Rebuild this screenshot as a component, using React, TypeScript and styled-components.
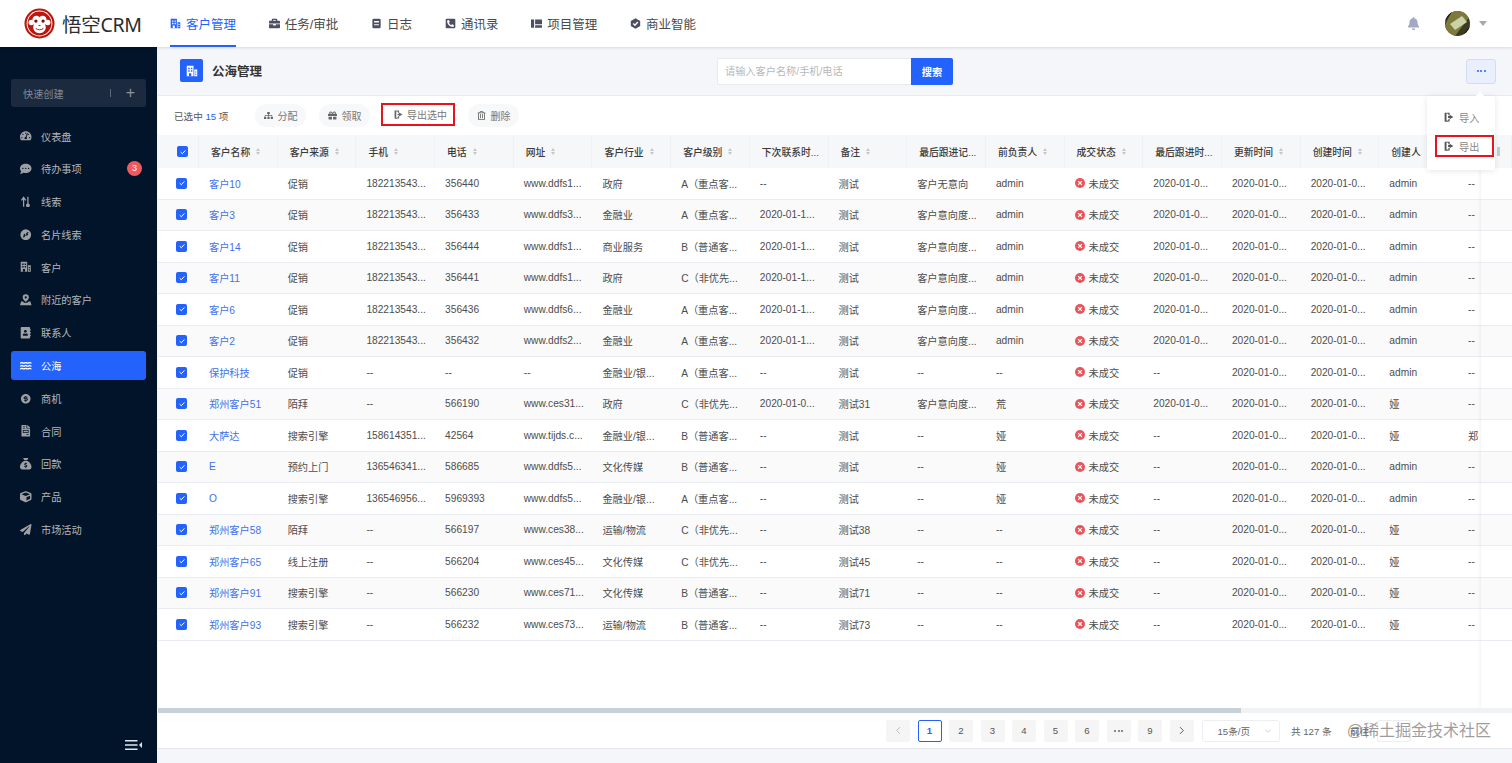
import styled, { createGlobalStyle } from 'styled-components'
import {
  FaAddressBook,
  FaBell,
  FaBriefcase,
  FaCommentDots,
  FaCube,
  FaFileInvoice,
  FaGift,
  FaPaperPlane,
  FaPhoneSquareAlt,
  FaRegTrashAlt,
  FaSitemap,
  FaTachometerAlt,
  FaWater,
} from 'react-icons/fa'
import { FaSackDollar } from 'react-icons/fa6'
import { RiMoneyDollarCircleFill } from 'react-icons/ri'

const GlobalStyle = createGlobalStyle`
  html, body {
    margin: 0;
    height: 100%;
    background: #f5f6f9;
    font-family: 'Liberation Sans', 'Noto Sans CJK SC', sans-serif;
    color: #4d4d4d;
  }
  * { box-sizing: border-box; }
`

const Page = styled.div`
  display: flex;
  flex-direction: column;
  width: 100%;
  height: 100vh;
  overflow: hidden;
`

const TopBar = styled.header`
  display: flex;
  align-items: center;
  flex: 0 0 47px;
  height: 47px;
  padding-left: 24px;
  background: #fff;
  box-shadow: 0 1px 3px rgba(0, 0, 0, 0.12);
  position: relative;
  z-index: 3;
`

const Brand = styled.div`
  display: flex;
  align-items: center;
  gap: 7px;
  width: 146px;
  font-family: 'Noto Sans', 'Noto Sans CJK SC', sans-serif;
  font-size: 19.5px;
  color: #2c2c2c;
  letter-spacing: -0.3px;
`

const Tabs = styled.nav`
  display: flex;
  gap: 32.8px;
  height: 47px;
`

const Tab = styled.a<{ $active?: boolean }>`
  display: flex;
  align-items: center;
  gap: 5px;
  height: 47px;
  padding-top: 2px;
  font-size: 12.5px;
  color: ${(p) => (p.$active ? '#2362fb' : '#4a4a4a')};
  border-bottom: 2px solid ${(p) => (p.$active ? '#2362fb' : 'transparent')};
  svg {
    width: 11px;
    height: 11px;
    color: ${(p) => (p.$active ? '#2362fb' : '#4d4d63')};
  }
`

const TopRight = styled.div`
  display: flex;
  align-items: center;
  margin-left: auto;
  padding-right: 25px;
  svg.bell {
    width: 13px;
    height: 13px;
    color: #a3a9c2;
    margin-right: 25px;
  }
`

const Caret = styled.span`
  width: 0;
  height: 0;
  margin-left: 9.5px;
  border-left: 4px solid transparent;
  border-right: 4px solid transparent;
  border-top: 5px solid #a8a8a8;
`

const Body = styled.div`
  display: flex;
  flex: 1;
  min-height: 0;
`

const Sidebar = styled.aside`
  display: flex;
  flex-direction: column;
  flex: 0 0 157px;
  padding: 32px 11px 13px;
  background: #021429;
`

const QuickCreate = styled.div`
  display: flex;
  align-items: center;
  height: 28px;
  padding: 0 11px 0 12px;
  border-radius: 3px;
  background: #1b2a3e;
  font-size: 10.2px;
  color: #7f8a99;
  span.sep {
    width: 1px;
    height: 8px;
    margin-left: auto;
    margin-right: 15px;
    background: #5c6879;
  }
  span.plus {
    font-size: 16px;
    line-height: 16px;
    font-weight: 300;
    color: #8a94a3;
  }
`

const Nav = styled.div`
  display: flex;
  flex-direction: column;
  gap: 3.8px;
  margin-top: 14.5px;
`

const NavItem = styled.a<{ $active?: boolean }>`
  position: relative;
  display: flex;
  align-items: center;
  gap: 9.500px;
  height: 29px;
  padding-left: 9px;
  border-radius: 3px;
  font-size: 10.2px;
  color: ${(p) => (p.$active ? '#fff' : '#b3b8bf')};
  background: ${(p) => (p.$active ? '#2362fb' : 'transparent')};
  svg {
    width: 11.500px;
    height: 11.500px;
    color: ${(p) => (p.$active ? '#fff' : '#9c9fa3')};
  }
`

const Badge = styled.span`
  position: absolute;
  right: 4px;
  top: 7px;
  width: 15px;
  height: 15px;
  border-radius: 50%;
  background: #f0595f;
  color: #fff;
  font-size: 9px;
  line-height: 15px;
  text-align: center;
`

const Collapse = styled.div`
  display: flex;
  justify-content: flex-end;
  margin-top: auto;
  padding-right: 4px;
  svg {
    width: 17px;
    height: 10px;
  }
`

const Main = styled.main`
  display: flex;
  flex-direction: column;
  flex: 1;
  min-width: 0;
  margin-left: 1px;
`

const PageHead = styled.div`
  display: grid;
  grid-template-columns: 1fr auto 1fr;
  align-items: center;
  flex: 0 0 48px;
  padding: 0 16px;
`

const Title = styled.div`
  display: flex;
  align-items: center;
  gap: 9px;
  margin: 0 0 1px 6px;
  font-size: 12.5px;
  font-weight: 600;
  color: #333;
`

const TitleIcon = styled.span`
  display: flex;
  align-items: center;
  justify-content: center;
  width: 23px;
  height: 23px;
  border-radius: 2px;
  background: #2362fb;
  color: #fff;
  svg {
    width: 12px;
    height: 12px;
  }
`

const Search = styled.div`
  display: flex;
  height: 27px;
`

const SearchInput = styled.div`
  width: 194px;
  padding-left: 7px;
  background: #fff;
  border: 1px solid #e8eaee;
  border-right: 0;
  border-radius: 2px 0 0 2px;
  font-size: 10.2px;
  line-height: 25px;
  color: #b5b8bd;
`

const SearchButton = styled.button`
  width: 42px;
  border: 0;
  border-radius: 0 2px 2px 0;
  background: #2362fb;
  color: #fff;
  font: 600 10.2px 'Liberation Sans', 'Noto Sans CJK SC', sans-serif;
`

const MoreButton = styled.button`
  justify-self: end;
  display: flex;
  align-items: center;
  justify-content: center;
  gap: 1.5px;
  width: 30px;
  height: 25px;
  border: 1px solid #d5dcf2;
  border-radius: 3px;
  background: #e9effd;
  span {
    width: 2px;
    height: 2px;
    border-radius: 50%;
    background: #2362fb;
  }
`

const Panel = styled.section`
  position: relative;
  display: flex;
  flex-direction: column;
  flex: 1;
  min-height: 0;
  background: #fff;
  border-top: 1px solid #e9ebef;
`

const Toolbar = styled.div`
  display: flex;
  align-items: center;
  flex: 0 0 39px;
  gap: 13px;
  padding-left: 16px;
`

const Selected = styled.div`
  width: 68px;
  font-size: 9.6px;
  color: #555;
  b {
    font-weight: 400;
    color: #2362fb;
  }
`

const ToolButton = styled.button<{ $marked?: boolean }>`
  display: flex;
  align-items: center;
  gap: ${(p) => (p.$marked ? '4px' : '5px')};
  height: 23px;
  margin: ${(p) => (p.$marked ? '0 0 2px -2px' : '0')};
  padding: ${(p) => (p.$marked ? '0 6px 0 11px' : '0 8.5px')};
  border: ${(p) => (p.$marked ? '2px solid #e8141c' : '0')};
  border-radius: ${(p) => (p.$marked ? '0' : '12px')};
  background: ${(p) => (p.$marked ? '#fff' : '#f7f8fa')};
  color: #777;
  font: 10px 'Liberation Sans', 'Noto Sans CJK SC', sans-serif;
  svg {
    width: 9px;
    height: 9px;
    color: #666;
  }
`

const Table = styled.div`
  position: relative;
  flex: 1;
  min-height: 0;
  overflow: hidden;
`

const gridColumns = '41px repeat(16, 78.7px) 23px 1fr'

const HeadRow = styled.div`
  display: grid;
  grid-template-columns: ${gridColumns};
  height: 33px;
  background: #f6f7f9;
`

const HeadCell = styled.div`
  display: flex;
  align-items: center;
  gap: 6px;
  padding-left: 12px;
  font-size: 9.8px;
  font-weight: 500;
  white-space: nowrap;
  overflow: hidden;
  color: #3a3a3a;
  border-right: 1px solid #f0f1f4;
  &:first-child {
    padding-left: 19px;
  }
`

const Sorter = styled.span`
  display: flex;
  flex-direction: column;
  gap: 1.5px;
  &::before,
  &::after {
    content: '';
    border-left: 2.5px solid transparent;
    border-right: 2.5px solid transparent;
  }
  &::before {
    border-bottom: 3px solid #c4c7cc;
  }
  &::after {
    border-top: 3px solid #c4c7cc;
  }
`

const Check = styled.span`
  display: flex;
  align-items: center;
  justify-content: center;
  width: 11px;
  height: 11px;
  border-radius: 2px;
  background: #2362fb;
  svg {
    width: 8px;
    height: 8px;
  }
`

const Row = styled.div<{ $odd: boolean }>`
  display: grid;
  grid-template-columns: ${gridColumns};
  height: 31.5px;
  background: ${(p) => (p.$odd ? '#fafafa' : '#fff')};
  border-bottom: 1px solid #e9ecf0;
`

const Cell = styled.div`
  display: flex;
  align-items: center;
  padding-left: 10px;
  font-size: 10.2px;
  white-space: nowrap;
  overflow: hidden;
  &:first-child {
    padding-left: 18px;
  }
`

const NameLink = styled.a`
  color: #3f71ea;
`

const Status = styled.span`
  display: flex;
  align-items: center;
  gap: 4px;
  svg {
    width: 10px;
    height: 10px;
  }
`

const FixedShade = styled.div`
  position: absolute;
  top: 0;
  right: 31px;
  bottom: 0;
  width: 4px;
  background: linear-gradient(to right, transparent, rgba(0, 0, 0, 0.035));
`

const HeadTool = styled.span`
  display: flex;
  align-self: center;
  margin-left: 4px;
  width: 3px;
  height: 9px;
  background: #c8cbd0;
`

const ScrollTrack = styled.div`
  flex: 0 0 5px;
  background: #f1f2f3;
`

const ScrollThumb = styled.div`
  width: 80%;
  height: 100%;
  background: #c8d1da;
`

const Pager = styled.div`
  position: relative;
  display: flex;
  align-items: center;
  flex: 0 0 35px;
  gap: 7.5px;
  padding-left: 728px;
  font-size: 9.6px;
`

const PageButton = styled.span<{ $current?: boolean; $muted?: boolean }>`
  display: flex;
  align-items: center;
  justify-content: center;
  width: 24px;
  height: 22px;
  border-radius: 2px;
  background: ${(p) => (p.$current ? '#fff' : '#f5f5f5')};
  border: 1px solid ${(p) => (p.$current ? '#2362fb' : '#f5f5f5')};
  color: ${(p) => (p.$current ? '#2362fb' : p.$muted ? '#bbb' : '#555')};
  font-weight: ${(p) => (p.$current ? 700 : 400)};
  svg {
    width: 9px;
    height: 9px;
  }
`

const PageDots = styled.span`
  display: flex;
  gap: 1.5px;
  i {
    width: 2px;
    height: 2px;
    border-radius: 50%;
    background: #666;
  }
`

const PageSize = styled.div`
  display: flex;
  align-items: center;
  justify-content: space-between;
  width: 78px;
  height: 22px;
  margin-left: 0.5px;
  padding: 0 7px 0 15px;
  border: 1px solid #eceef1;
  border-radius: 3px;
  color: #666;
  svg {
    width: 8px;
    height: 8px;
  }
`

const PagerText = styled.span`
  margin-left: 4px;
  color: #666;
`

const JumpText = styled.span`
  margin-left: 11px;
  color: #666;
`

const JumpBox = styled.span`
  width: 34px;
  height: 22px;
  border: 1px solid #eceef1;
  border-radius: 2px;
`

const Watermark = styled.div`
  position: absolute;
  right: 21px;
  top: 7px;
  font-size: 16px;
  line-height: 22px;
  color: rgba(120, 120, 120, 0.72);
  pointer-events: none;
  white-space: nowrap;
`

const Dropdown = styled.div`
  position: absolute;
  top: 0;
  right: 17px;
  z-index: 2;
  display: flex;
  flex-direction: column;
  gap: 7px;
  width: 68px;
  height: 74px;
  padding: 10px 1px 0 8px;
  background: #fff;
  border-radius: 2px;
  box-shadow: 0 1px 6px rgba(0, 0, 0, 0.1);
  &::before {
    content: '';
    position: absolute;
    top: -3px;
    right: 12px;
    width: 6px;
    height: 6px;
    background: #fff;
    transform: rotate(45deg);
  }
`

const DropItem = styled.div<{ $marked?: boolean }>`
  display: flex;
  align-items: center;
  gap: 5px;
  height: 22px;
  padding-left: 9px;
  border: ${(p) => (p.$marked ? '2px solid #e8141c' : '0')};
  font-size: 10.2px;
  color: #888;
  svg {
    width: 10px;
    height: 10px;
    color: #555;
    margin-left: ${(p) => (p.$marked ? '-2px' : '0')};
  }
`

const Foot = styled.div`
  flex: 0 0 15px;
  background: #f5f6f9;
  border-top: 1px solid #e6e8ec;
`

const BuildingIcon = () => (
  <svg viewBox="0 0 16 16" fill="currentColor">
    <path d="M1 1h9v14H1zM11 6h4v9h-4z" />
    <path fill="#fff" d="M3 3.500h2v2H3zM6.500 3.500h2v2h-2zM3 7h2v2H3zM6.500 7h2v2h-2zM12.200 8.500h1.600v1.600h-1.600zM12.200 11.500h1.600v1.600h-1.600zM4 11h3v4H4z" />
  </svg>
)

const NavBuildingIcon = () => (
  <svg viewBox="0 0 16 16" fill="currentColor">
    <path d="M1 1h9v14H1zM11 6h4v9h-4z" />
    <path fill="#021429" d="M3 3.500h2v2H3zM6.500 3.500h2v2h-2zM3 7h2v2H3zM6.500 7h2v2h-2zM12.200 8.500h1.600v1.600h-1.600zM12.200 11.500h1.600v1.600h-1.600zM4 11h3v4H4z" />
  </svg>
)

const NotebookIcon = () => (
  <svg viewBox="0 0 16 16" fill="currentColor">
    <rect x="2" y="1" width="12" height="14" rx="2" />
    <path fill="#fff" d="M4.500 4.500h7v2h-7zM4.500 9h7v1.600h-7z" />
  </svg>
)

const ProjectIcon = () => (
  <svg viewBox="0 0 16 16" fill="currentColor">
    <path d="M0 2h4.500v12H0zM6 2h10v7H6zM6 10.500h10V14H6z" />
  </svg>
)

const HexCheckIcon = () => (
  <svg viewBox="0 0 16 16">
    <path fill="currentColor" d="M8 .500 14.800 4.200v7.600L8 15.500 1.200 11.800V4.200z" />
    <path fill="none" stroke="#fff" strokeWidth="2" d="M4.800 8 7.200 10.400 11.400 5.800" />
  </svg>
)

const DoorIcon = () => (
  <svg viewBox="0 0 16 16" fill="currentColor">
    <path d="M1 1h8v4H7V3L4 2v12l3-1v-2h2v4H5v1L1 15z" />
    <path d="M9 6.500V4.500L15 8l-6 3.500v-2H6.500v-3z" />
  </svg>
)

const ArrowsIcon = () => (
  <svg viewBox="0 0 16 16" fill="none" stroke="currentColor" strokeWidth="1.800">
    <path d="M5 15V3M2 6l3-4 3 4" />
    <path d="M11 1v11" />
    <circle cx="11" cy="13" r="1.800" fill="currentColor" />
  </svg>
)

const LinkCircleIcon = () => (
  <svg viewBox="0 0 16 16">
    <circle cx="8" cy="8" r="7.500" fill="currentColor" />
    <path fill="none" stroke="#021429" strokeWidth="1.600" strokeLinecap="round" d="M5 11l2-2M9 7l2-2M6.500 7.500 5.500 8.500M9.500 8.500l1-1" />
  </svg>
)

const NearbyIcon = () => (
  <svg viewBox="0 0 16 16" fill="currentColor">
    <path d="M8 0.500a4.300 4.300 0 0 1 4.300 4.300C12.300 7.800 8 11 8 11S3.700 7.800 3.700 4.800A4.300 4.300 0 0 1 8 .500z" />
    <circle cx="8" cy="4.800" r="1.600" fill="#021429" />
    <path d="M1.500 10.500h2.800L5.500 12h5l1.200-1.500h2.800L16 15.500H0z" />
  </svg>
)

const StatusIcon = () => (
  <svg viewBox="0 0 16 16">
    <circle cx="8" cy="8" r="8" fill="#e9545b" />
    <path stroke="#fff" strokeWidth="2" d="M5 5l6 6M11 5l-6 6" />
  </svg>
)

const CheckMark = () => (
  <svg viewBox="0 0 12 12" fill="none" stroke="#fff" strokeWidth="1.500">
    <path d="M2.500 6.200 5 8.600 9.600 3.600" />
  </svg>
)

const Logo = () => (
  <svg width="31" height="31" viewBox="0 0 32 32">
    <circle cx="16" cy="16" r="15.500" fill="#b8160e" />
    <circle cx="16" cy="16" r="13.300" fill="#fff" />
    <circle cx="16" cy="16" r="12.300" fill="#b8160e" />
    <circle cx="7.500" cy="15" r="2.800" fill="#fff" />
    <circle cx="24.500" cy="15" r="2.800" fill="#fff" />
    <path fill="#fff" d="M16 9.500c1.500-2 6.500-2.500 7.200 1.800.4 2.800-1 4.500-1.200 6.200 2 5-2.500 8.500-6 8.500s-8-3.500-6-8.500c-.2-1.700-1.600-3.400-1.200-6.200C9.500 7 14.500 7.500 16 9.500z" />
    <circle cx="12.300" cy="13.500" r="1.700" fill="#7a1008" />
    <circle cx="19.700" cy="13.500" r="1.700" fill="#7a1008" />
    <path fill="none" stroke="#b8160e" strokeWidth="1" d="M12 21c2.500 2 5.500 2 8 0M15 18h2" />
  </svg>
)

const Avatar = () => (
  <svg width="25" height="25" viewBox="0 0 25 25">
    <defs>
      <clipPath id="avatarClip">
        <circle cx="12.500" cy="12.500" r="12.500" />
      </clipPath>
    </defs>
    <g clipPath="url(#avatarClip)">
      <rect width="25" height="25" fill="#3c3a22" />
      <path fill="#7d7a3c" d="M0 14 7 0h18v5L10 25H0z" />
      <path fill="#c8d3a7" d="M5 13 17 5l5 6-12 8z" />
      <path fill="#1d1c12" d="M17 25l8-10v10zM0 0h8L0 10z" />
    </g>
  </svg>
)

const CollapseIcon = () => (
  <svg viewBox="0 0 17 10" fill="#dfe5f0">
    <path d="M0 0h12.500v1.600H0zM0 4.200h12.500v1.600H0zM0 8.400h12.500V10H0zM17 2v6l-3-3z" />
  </svg>
)

const ChevronDown = () => (
  <svg viewBox="0 0 12 12" fill="none" stroke="#c4c7cc" strokeWidth="1.200">
    <path d="M2 4l4 4 4-4" />
  </svg>
)

const ChevronSide = ({ dir }: { dir: 'left' | 'right' }) => (
  <svg viewBox="0 0 12 12" fill="none" stroke="currentColor" strokeWidth="1.300">
    <path d={dir === 'left' ? 'M8 1.500 3.500 6 8 10.500' : 'M4 1.500 8.500 6 4 10.500'} />
  </svg>
)

const tabs = [
  { label: '客户管理', icon: <BuildingIcon />, active: true },
  { label: '任务/审批', icon: <FaBriefcase /> },
  { label: '日志', icon: <NotebookIcon /> },
  { label: '通讯录', icon: <FaPhoneSquareAlt /> },
  { label: '项目管理', icon: <ProjectIcon /> },
  { label: '商业智能', icon: <HexCheckIcon /> },
]

const navItems = [
  { label: '仪表盘', icon: <FaTachometerAlt /> },
  { label: '待办事项', icon: <FaCommentDots />, badge: 3 },
  { label: '线索', icon: <ArrowsIcon /> },
  { label: '名片线索', icon: <LinkCircleIcon /> },
  { label: '客户', icon: <NavBuildingIcon /> },
  { label: '附近的客户', icon: <NearbyIcon /> },
  { label: '联系人', icon: <FaAddressBook /> },
  { label: '公海', icon: <FaWater />, active: true },
  { label: '商机', icon: <RiMoneyDollarCircleFill /> },
  { label: '合同', icon: <FaFileInvoice /> },
  { label: '回款', icon: <FaSackDollar /> },
  { label: '产品', icon: <FaCube /> },
  { label: '市场活动', icon: <FaPaperPlane /> },
]

const columns = [
  { label: '客户名称', sort: true },
  { label: '客户来源', sort: true },
  { label: '手机', sort: true },
  { label: '电话', sort: true },
  { label: '网址', sort: true },
  { label: '客户行业', sort: true },
  { label: '客户级别', sort: true },
  { label: '下次联系时...' },
  { label: '备注', sort: true },
  { label: '最后跟进记...' },
  { label: '前负责人', sort: true },
  { label: '成交状态', sort: true },
  { label: '最后跟进时...' },
  { label: '更新时间', sort: true },
  { label: '创建时间', sort: true },
  { label: '创建人' },
]

const levelA = 'A（重点客...'
const levelB = 'B（普通客...'
const levelC = 'C（非优先...'
const date0 = '2020-01-0...'
const date1 = '2020-01-1...'
const phone = '182213543...'
const intent = '客户意向度...'

// name, source, mobile, tel, site, industry, level, next, note, record, owner, last, creator, tail
const rows = [
  ['客户10', '促销', phone, '356440', 'www.ddfs1...', '政府', levelA, '--', '测试', '客户无意向', 'admin', date0, 'admin', '--'],
  ['客户3', '促销', phone, '356433', 'www.ddfs3...', '金融业', levelA, date1, '测试', intent, 'admin', date0, 'admin', '--'],
  ['客户14', '促销', phone, '356444', 'www.ddfs1...', '商业服务', levelB, date1, '测试', intent, 'admin', date0, 'admin', '--'],
  ['客户11', '促销', phone, '356441', 'www.ddfs1...', '政府', levelC, date1, '测试', intent, 'admin', date0, 'admin', '--'],
  ['客户6', '促销', phone, '356436', 'www.ddfs6...', '金融业', levelA, date1, '测试', intent, 'admin', date0, 'admin', '--'],
  ['客户2', '促销', phone, '356432', 'www.ddfs2...', '金融业', levelA, date1, '测试', intent, 'admin', date0, 'admin', '--'],
  ['保护科技', '促销', '--', '--', '--', '金融业/银...', levelA, '--', '测试', '--', '--', '--', 'admin', '--'],
  ['郑州客户51', '陌拜', '--', '566190', 'www.ces31...', '政府', levelC, date0, '测试31', intent, '荒', date0, '娅', '--'],
  ['大萨达', '搜索引擎', '158614351...', '42564', 'www.tijds.c...', '金融业/银...', levelB, '--', '测试', '--', '娅', '--', '娅', '郑'],
  ['E', '预约上门', '136546341...', '586685', 'www.ddfs5...', '文化传媒', levelB, '--', '测试', '--', '娅', '--', 'admin', '--'],
  ['O', '搜索引擎', '136546956...', '5969393', 'www.ddfs5...', '金融业/银...', levelA, '--', '测试', '--', '娅', '--', 'admin', '--'],
  ['郑州客户58', '陌拜', '--', '566197', 'www.ces38...', '运输/物流', levelC, '--', '测试38', '--', '--', '--', '娅', '--'],
  ['郑州客户65', '线上注册', '--', '566204', 'www.ces45...', '文化传媒', levelC, '--', '测试45', '--', '--', '--', '娅', '--'],
  ['郑州客户91', '搜索引擎', '--', '566230', 'www.ces71...', '文化传媒', levelB, '--', '测试71', '--', '--', '--', '娅', '--'],
  ['郑州客户93', '搜索引擎', '--', '566232', 'www.ces73...', '运输/物流', levelB, '--', '测试73', '--', '--', '--', '娅', '--'],
]

export default function App() {
  return (
    <>
      <GlobalStyle />
      <Page>
        <TopBar>
          <Brand>
            <Logo />
            <span>悟空CRM</span>
          </Brand>
          <Tabs>
            {tabs.map((tab) => (
              <Tab key={tab.label} $active={tab.active}>
                {tab.icon}
                {tab.label}
              </Tab>
            ))}
          </Tabs>
          <TopRight>
            <FaBell className="bell" />
            <Avatar />
            <Caret />
          </TopRight>
        </TopBar>
        <Body>
          <Sidebar>
            <QuickCreate>
              快速创建
              <span className="sep" />
              <span className="plus">+</span>
            </QuickCreate>
            <Nav>
              {navItems.map((item) => (
                <NavItem key={item.label} $active={item.active}>
                  {item.icon}
                  {item.label}
                  {item.badge && <Badge>{item.badge}</Badge>}
                </NavItem>
              ))}
            </Nav>
            <Collapse>
              <CollapseIcon />
            </Collapse>
          </Sidebar>
          <Main>
            <PageHead>
              <Title>
                <TitleIcon>
                  <svg viewBox="0 0 16 16" fill="#fff">
                    <path d="M1 1h9v14H1zM11 6h4v9h-4z" />
                    <path fill="#2362fb" d="M3 3.500h2v2H3zM6.500 3.500h2v2h-2zM3 7h2v2H3zM6.500 7h2v2h-2zM12.200 8.500h1.600v1.600h-1.600zM12.200 11.500h1.600v1.600h-1.600zM4 11h3v4H4z" />
                  </svg>
                </TitleIcon>
                公海管理
              </Title>
              <Search>
                <SearchInput>请输入客户名称/手机/电话</SearchInput>
                <SearchButton>搜索</SearchButton>
              </Search>
              <MoreButton>
                <span />
                <span />
                <span />
              </MoreButton>
            </PageHead>
            <Panel>
              <Toolbar>
                <Selected>
                  已选中 <b>15</b> 项
                </Selected>
                <ToolButton>
                  <FaSitemap />
                  分配
                </ToolButton>
                <ToolButton>
                  <FaGift />
                  领取
                </ToolButton>
                <ToolButton $marked>
                  <DoorIcon />
                  导出选中
                </ToolButton>
                <ToolButton>
                  <FaRegTrashAlt />
                  删除
                </ToolButton>
              </Toolbar>
              <Dropdown>
                <DropItem>
                  <DoorIcon />
                  导入
                </DropItem>
                <DropItem $marked>
                  <DoorIcon />
                  导出
                </DropItem>
              </Dropdown>
              <Table>
                <HeadRow>
                  <HeadCell>
                    <Check>
                      <CheckMark />
                    </Check>
                  </HeadCell>
                  {columns.map((col) => (
                    <HeadCell key={col.label}>
                      {col.label}
                      {col.sort && <Sorter />}
                    </HeadCell>
                  ))}
                  <HeadCell />
                  <HeadCell>
                    <HeadTool />
                  </HeadCell>
                </HeadRow>
                {rows.map((row, index) => {
                  const [name, source, mobile, tel, site, industry, level, next, note, record, owner, last, creator, tail] = row
                  return (
                    <Row key={name} $odd={index % 2 === 1}>
                      <Cell>
                        <Check>
                          <CheckMark />
                        </Check>
                      </Cell>
                      <Cell>
                        <NameLink>{name}</NameLink>
                      </Cell>
                      <Cell>{source}</Cell>
                      <Cell>{mobile}</Cell>
                      <Cell>{tel}</Cell>
                      <Cell>{site}</Cell>
                      <Cell>{industry}</Cell>
                      <Cell>{level}</Cell>
                      <Cell>{next}</Cell>
                      <Cell>{note}</Cell>
                      <Cell>{record}</Cell>
                      <Cell>{owner}</Cell>
                      <Cell>
                        <Status>
                          <StatusIcon />
                          未成交
                        </Status>
                      </Cell>
                      <Cell>{last}</Cell>
                      <Cell>{date0}</Cell>
                      <Cell>{date0}</Cell>
                      <Cell>{creator}</Cell>
                      <Cell>{tail}</Cell>
                      <Cell />
                    </Row>
                  )
                })}
                <FixedShade />
              </Table>
              <ScrollTrack>
                <ScrollThumb />
              </ScrollTrack>
              <Pager>
                <PageButton $muted>
                  <ChevronSide dir="left" />
                </PageButton>
                <PageButton $current>1</PageButton>
                <PageButton>2</PageButton>
                <PageButton>3</PageButton>
                <PageButton>4</PageButton>
                <PageButton>5</PageButton>
                <PageButton>6</PageButton>
                <PageButton>
                  <PageDots>
                    <i />
                    <i />
                    <i />
                  </PageDots>
                </PageButton>
                <PageButton>9</PageButton>
                <PageButton>
                  <ChevronSide dir="right" />
                </PageButton>
                <PageSize>
                  15条/页
                  <ChevronDown />
                </PageSize>
                <PagerText>共 127 条</PagerText>
                <JumpText>前往</JumpText>
                <JumpBox />
                <Watermark>@稀土掘金技术社区</Watermark>
              </Pager>
            </Panel>
            <Foot />
          </Main>
        </Body>
      </Page>
    </>
  )
}
